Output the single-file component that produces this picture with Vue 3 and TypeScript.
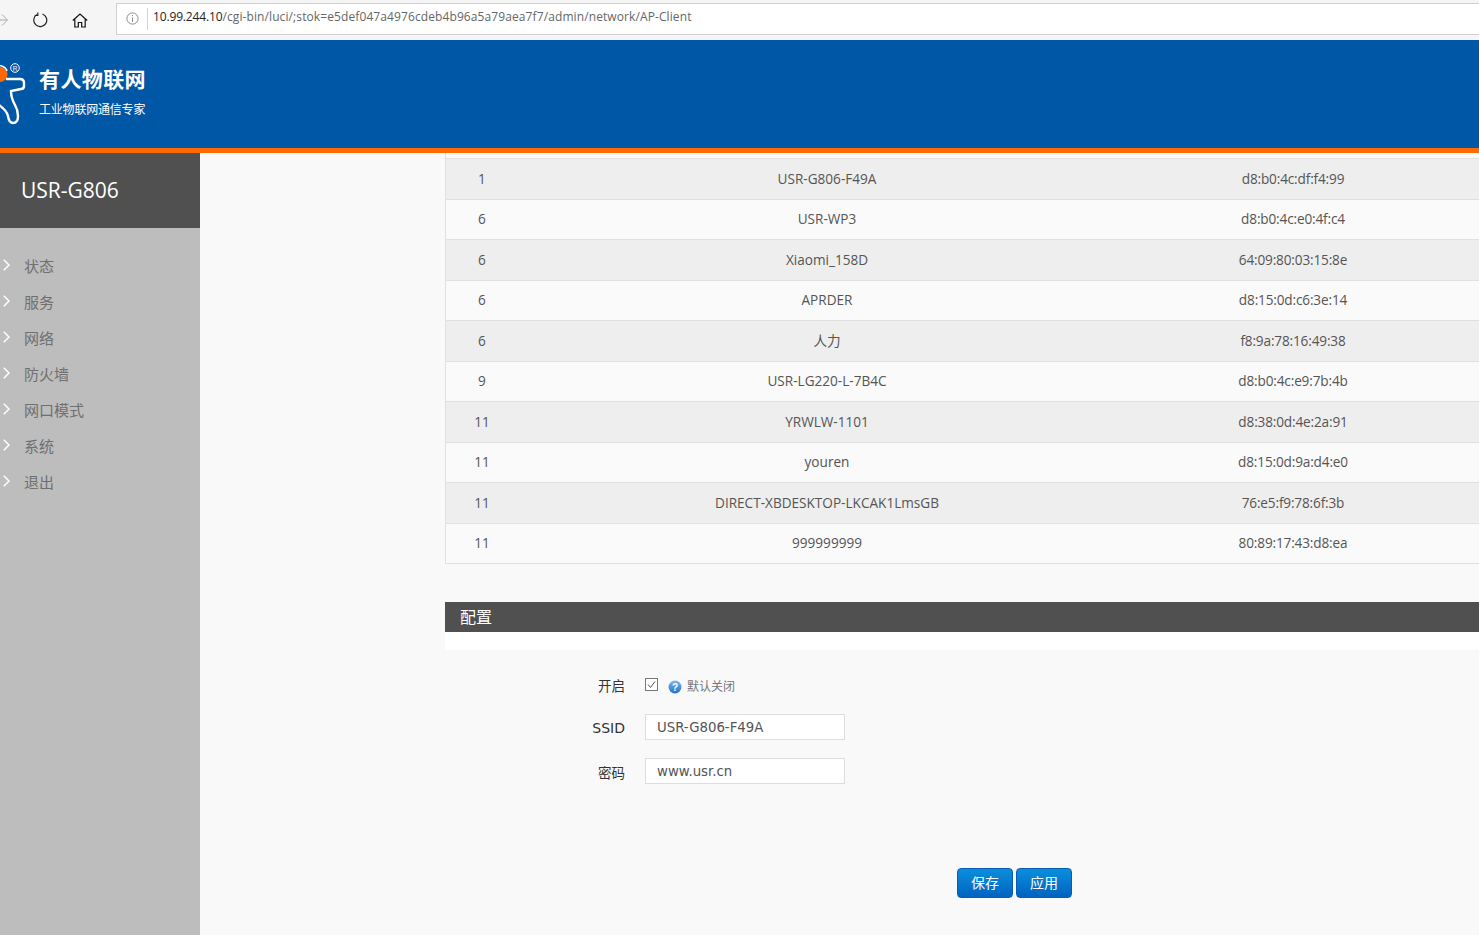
<template>
  <div class="page">
    <div class="browser-bar">
      <svg class="nav-icon forward" width="10" height="14" viewBox="0 0 10 14">
        <path d="M0 7H8M3 1.500 8.500 7 3 12.500" fill="none" stroke="#a8a8a8" stroke-width="1" />
      </svg>
      <svg class="nav-icon reload" width="16" height="16" viewBox="0 0 16 16">
        <path d="M4.800 2.600A6.500 6.500 0 1 0 10.500 2" fill="none" stroke="#222" stroke-width="1.200" />
        <path d="M5.800 .5V3.500H2.800" fill="none" stroke="#222" stroke-width="1.200" />
      </svg>
      <svg class="nav-icon home" width="16" height="15" viewBox="0 0 16 15">
        <path d="M.8 7.500 8 1l7.200 6.500M2.800 6.200V14H6.300V9.500H9.700V14H13.200V6.200" fill="none" stroke="#111" stroke-width="1.200" />
      </svg>
      <div class="address">
        <svg class="info" width="13" height="13" viewBox="0 0 13 13">
          <circle cx="6.500" cy="6.500" r="5.600" fill="none" stroke="#8a8a8a" />
          <path d="M6.500 5.500V10M6.500 3V4.200" stroke="#8a8a8a" />
        </svg>
        <span class="divider"></span>
        <span class="host">10.99.244.10</span><span class="path">/cgi-bin/luci/;stok=e5def047a4976cdeb4b96a5a79aea7f7/admin/network/AP-Client</span>
      </div>
    </div>

    <header class="header">
      <svg class="logo" width="30" height="72" viewBox="0 0 30 72">
        <circle cx="0" cy="16.500" r="7.500" fill="#ff6a00" />
        <path d="M0 7.500Q6 9 7 13" fill="none" stroke="#fff" stroke-width="1.500" />
        <path d="M6 21H20Q24 21 24 25V28Q24 31 21 31L11 33Q11 40 15 47Q18 52 18 58Q18 65 13 65Q9 65 8 58Q7 53 -1 47" fill="none" stroke="#fff" stroke-width="2.400" />
        <circle cx="15" cy="10" r="4.300" fill="none" stroke="#fff" stroke-width="1" />
        <text x="15" y="12.500" class="reg">R</text>
      </svg>
      <div class="brand">
        <div class="brand-name">有人物联网</div>
        <div class="brand-slogan">工业物联网通信专家</div>
      </div>
    </header>

    <div class="body">
      <aside class="sidebar">
        <div class="model">USR-G806</div>
        <ul class="menu">
          <li v-for="item in menu" :key="item">
            <svg width="7" height="12" viewBox="0 0 7 12">
              <path d="M.8 .8 6 6 .8 11.200" fill="none" stroke="#fff" stroke-width="1.500" />
            </svg>
            <span>{{ item }}</span>
          </li>
        </ul>
      </aside>

      <main class="main">
        <div class="table">
          <div v-for="(row, i) in rows" :key="row.mac" class="row" :class="{ odd: i % 2 === 0 }">
            <div>{{ row.channel }}</div>
            <div>{{ row.ssid }}</div>
            <div class="mac">{{ row.mac }}</div>
          </div>
        </div>

        <h3 class="section-title">配置</h3>
        <div class="section-strip"></div>

        <form class="form" @submit.prevent>
          <div class="field first">
            <label>开启</label>
            <span class="checkbox">
              <svg width="13" height="13" viewBox="0 0 13 13">
                <rect x=".5" y=".5" width="12" height="12" fill="#fff" stroke="#777" />
                <path d="M3 6.500 5.500 9.500 10 3.500" fill="none" stroke="#555" />
              </svg>
            </span>
            <svg class="help" width="14" height="14" viewBox="0 0 14 14">
              <defs>
                <linearGradient id="help-fill" x1="0" y1="0" x2="0" y2="1">
                  <stop offset="0" stop-color="#7fb8ec" />
                  <stop offset="1" stop-color="#2273c4" />
                </linearGradient>
              </defs>
              <circle cx="7" cy="7" r="6.500" fill="url(#help-fill)" />
              <text x="7" y="10.500" class="help-mark">?</text>
            </svg>
            <span class="hint">默认关闭</span>
          </div>
          <div class="field">
            <label class="low">SSID</label>
            <input type="text" value="USR-G806-F49A" />
          </div>
          <div class="field">
            <label class="low cjk">密码</label>
            <input type="text" value="www.usr.cn" />
          </div>
          <div class="actions">
            <button type="button">保存</button>
            <button type="button">应用</button>
          </div>
        </form>
      </main>
    </div>
  </div>
</template>

<script setup lang="ts">
const menu = ['状态', '服务', '网络', '防火墙', '网口模式', '系统', '退出']

const rows = [
  { channel: 1, ssid: 'USR-G806-F49A', mac: 'd8:b0:4c:df:f4:99' },
  { channel: 6, ssid: 'USR-WP3', mac: 'd8:b0:4c:e0:4f:c4' },
  { channel: 6, ssid: 'Xiaomi_158D', mac: '64:09:80:03:15:8e' },
  { channel: 6, ssid: 'APRDER', mac: 'd8:15:0d:c6:3e:14' },
  { channel: 6, ssid: '人力', mac: 'f8:9a:78:16:49:38' },
  { channel: 9, ssid: 'USR-LG220-L-7B4C', mac: 'd8:b0:4c:e9:7b:4b' },
  { channel: 11, ssid: 'YRWLW-1101', mac: 'd8:38:0d:4e:2a:91' },
  { channel: 11, ssid: 'youren', mac: 'd8:15:0d:9a:d4:e0' },
  { channel: 11, ssid: 'DIRECT-XBDESKTOP-LKCAK1LmsGB', mac: '76:e5:f9:78:6f:3b' },
  { channel: 11, ssid: '999999999', mac: '80:89:17:43:d8:ea' }
]
</script>

<style>
html,
body {
  margin: 0;
  overflow: hidden;
}
</style>

<style scoped>
.page {
  width: 1479px;
  height: 935px;
  overflow: hidden;
  display: flex;
  flex-direction: column;
  background: #f9f9f9;
  font-family: "Open Sans", "Noto Sans CJK SC", sans-serif;
  font-size: 14px;
  color: #555;
}

.browser-bar {
  height: 40px;
  flex: none;
  box-sizing: border-box;
  display: flex;
  align-items: center;
  background: #f5f5f5;
  overflow: hidden;
}

.nav-icon {
  flex: none;
}

.forward {
  margin-left: -1px;
}

.reload {
  margin-left: 23px;
}

.home {
  margin-left: 24px;
}

.address {
  margin-left: 28px;
  height: 32px;
  width: 1400px;
  flex: none;
  box-sizing: border-box;
  margin-top: -3px;
  border: 1px solid #d0d0d0;
  background: #fff;
  display: flex;
  align-items: center;
  font-size: 12px;
  white-space: nowrap;
}

.info {
  margin-left: 9px;
  flex: none;
}

.divider {
  width: 1px;
  height: 22px;
  background: #d4d4d4;
  margin: 0 5px 0 8px;
}

.host {
  color: #222;
  margin-top: -4px;
  letter-spacing: -0.15px;
}

.path {
  color: #666;
  margin-top: -4px;
  letter-spacing: 0.1px;
}

.header {
  height: 108px;
  flex: none;
  display: flex;
  background: #0057a6;
  border-bottom: 5px solid #ff6a00;
  color: #fff;
}

.logo {
  margin-top: 18px;
  flex: none;
  overflow: hidden;
}

.reg {
  font-size: 6.500px;
  fill: #fff;
  text-anchor: middle;
  font-family: "Liberation Sans", sans-serif;
}

.brand {
  margin-left: 9px;
  padding-top: 24px;
}

.brand-name {
  font-size: 21px;
  line-height: 30px;
  font-weight: 700;
  letter-spacing: 0.4px;
}

.brand-slogan {
  margin-top: 7px;
  font-size: 12px;
  line-height: 18px;
  letter-spacing: -0.2px;
}

.body {
  flex: 1;
  display: flex;
  min-height: 0;
}

.sidebar {
  width: 200px;
  flex: none;
  background: #bdbdbd;
}

.model {
  height: 75px;
  box-sizing: border-box;
  padding: 23px 0 0 21px;
  background: #505050;
  color: #fff;
  font-size: 21px;
  line-height: 28px;
}

.menu {
  list-style: none;
  margin: 0;
  padding: 19px 0 0 3px;
}

.menu li {
  height: 36px;
  display: flex;
  align-items: center;
  gap: 14px;
  font-size: 15px;
  color: #6f6f6f;
}

.main {
  flex: 1;
  min-width: 0;
  padding-left: 245px;
}

.table {
  width: 1200px;
  padding-top: 5px;
  background: #fafafa;
  border-left: 1px solid #e0e0e0;
  box-sizing: border-box;
}

.row {
  display: grid;
  grid-template-columns: 72px 618px 314px 1fr;
  height: 40.5px;
  box-sizing: border-box;
  padding-top: 0.6px;
  border-top: 1px solid #e0e0e0;
  background: #fafafa;
  text-align: center;
  line-height: 38.8px;
  font-size: 13.600px;
  color: #555;
}

.row.odd {
  background: #eeeeee;
}

.row:last-child {
  border-bottom: 1px solid #e0e0e0;
  height: 41px;
}

.mac {
  letter-spacing: -0.15px;
}

.section-title {
  margin: 38px 0 0;
  height: 30px;
  padding-left: 15px;
  background: #505050;
  color: #fff;
  font-size: 16px;
  font-weight: 400;
  line-height: 31px;
}

.section-strip {
  height: 18px;
  background: #fff;
}

.form {
  padding-top: 17px;
}

.field {
  display: flex;
  align-items: center;
  height: 26px;
  margin-bottom: 18px;
  color: #333;
  font-family: "DejaVu Sans", "Noto Sans CJK SC", sans-serif;
  font-size: 14px;
}

.field.first {
  height: 36px;
  margin-bottom: 11px;
}

.field label {
  width: 180px;
  flex: none;
  text-align: right;
  margin-right: 20px;
}

.field.first label,
.field label.cjk {
  font-size: 13.500px;
}

.field label.low {
  padding-top: 3px;
}

.checkbox {
  height: 13px;
  display: flex;
  margin-top: -1px;
}

.help {
  margin-left: 10px;
  margin-top: 5px;
}

.help-mark {
  font-size: 10px;
  font-weight: 700;
  fill: #fff;
  text-anchor: middle;
  font-family: "Liberation Sans", sans-serif;
}

.hint {
  margin-left: 5px;
  margin-top: 2px;
  font-size: 12px;
  color: #777;
}

input {
  width: 200px;
  height: 26px;
  box-sizing: border-box;
  border: 1px solid #ddd;
  background: #fff;
  padding: 1px 11px 0;
  font: 13.300px "DejaVu Sans", "Noto Sans CJK SC", sans-serif;
  color: #555;
  outline: none;
}

.actions {
  display: flex;
  gap: 3px;
  margin-top: 84px;
  padding-left: 512px;
}

button {
  width: 56px;
  height: 30px;
  padding: 0 0 2px;
  border: 1px solid #0a5cb0;
  border-radius: 4px;
  background: linear-gradient(#0a8fdc, #0063c0);
  color: #fff;
  font: 14px "Noto Sans CJK SC", sans-serif;
}
</style>
